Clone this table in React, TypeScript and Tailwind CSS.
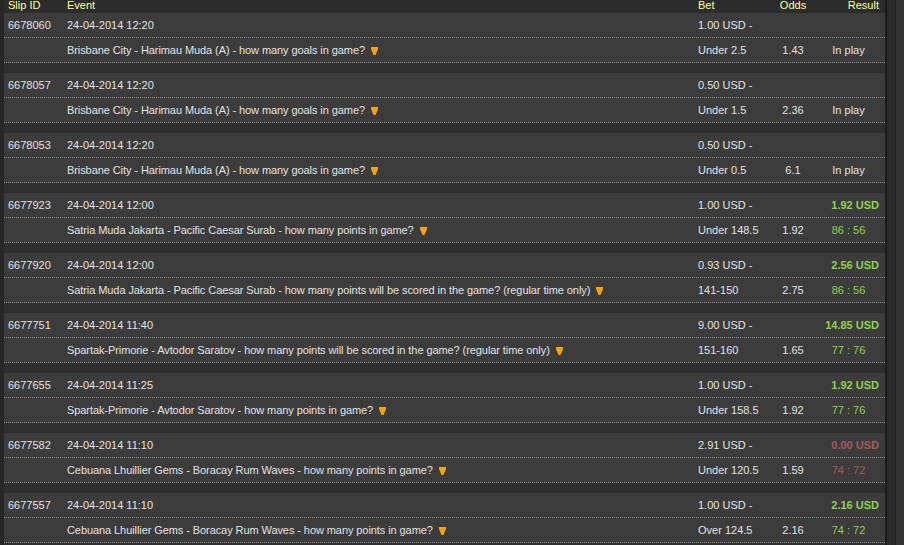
import React from "react";

type Slip = {
  id: string;
  date: string;
  bet: string;
  win: string;
  event: string;
  pick: string;
  odds: string;
  score: string;
  state: "play" | "win" | "loss";
};

const slips: Slip[] = [
  { id: "6678060", date: "24-04-2014 12:20", bet: "1.00 USD -", win: "", event: "Brisbane City - Harimau Muda (A) - how many goals in game?", pick: "Under 2.5", odds: "1.43", score: "In play", state: "play" },
  { id: "6678057", date: "24-04-2014 12:20", bet: "0.50 USD -", win: "", event: "Brisbane City - Harimau Muda (A) - how many goals in game?", pick: "Under 1.5", odds: "2.36", score: "In play", state: "play" },
  { id: "6678053", date: "24-04-2014 12:20", bet: "0.50 USD -", win: "", event: "Brisbane City - Harimau Muda (A) - how many goals in game?", pick: "Under 0.5", odds: "6.1", score: "In play", state: "play" },
  { id: "6677923", date: "24-04-2014 12:00", bet: "1.00 USD -", win: "1.92 USD", event: "Satria Muda Jakarta - Pacific Caesar Surab - how many points in game?", pick: "Under 148.5", odds: "1.92", score: "86 : 56", state: "win" },
  { id: "6677920", date: "24-04-2014 12:00", bet: "0.93 USD -", win: "2.56 USD", event: "Satria Muda Jakarta - Pacific Caesar Surab - how many points will be scored in the game? (regular time only)", pick: "141-150", odds: "2.75", score: "86 : 56", state: "win" },
  { id: "6677751", date: "24-04-2014 11:40", bet: "9.00 USD -", win: "14.85 USD", event: "Spartak-Primorie - Avtodor Saratov - how many points will be scored in the game? (regular time only)", pick: "151-160", odds: "1.65", score: "77 : 76", state: "win" },
  { id: "6677655", date: "24-04-2014 11:25", bet: "1.00 USD -", win: "1.92 USD", event: "Spartak-Primorie - Avtodor Saratov - how many points in game?", pick: "Under 158.5", odds: "1.92", score: "77 : 76", state: "win" },
  { id: "6677582", date: "24-04-2014 11:10", bet: "2.91 USD -", win: "0.00 USD", event: "Cebuana Lhuillier Gems - Boracay Rum Waves - how many points in game?", pick: "Under 120.5", odds: "1.59", score: "74 : 72", state: "loss" },
  { id: "6677557", date: "24-04-2014 11:10", bet: "1.00 USD -", win: "2.16 USD", event: "Cebuana Lhuillier Gems - Boracay Rum Waves - how many points in game?", pick: "Over 124.5", odds: "2.16", score: "74 : 72", state: "win" },
];

const cols = "grid grid-cols-[63px_631px_72px_46px_65px]";

function Arrow() {
  return (
    <svg width="7" height="8" viewBox="0 0 7 8" className="inline-block ml-[6px] align-[-1px]">
      <polygon points="0,0 7,0 7,2 4.5,8 2.5,8 0,2" fill="#f5a30a" />
    </svg>
  );
}

function Row({ s }: { s: Slip }) {
  const color = s.state === "win" ? "text-[#8fd14f]" : s.state === "loss" ? "text-[#a65a5a]" : "text-[#e2e2e2]";
  return (
    <div className="bg-[#3c3c3c]">
      <div className={`${cols} h-[25px] leading-[24px] border-b border-dotted border-[#8a8a8a]`}>
        <div className="pl-[4px]">{s.id}</div>
        <div>{s.date}</div>
        <div>{s.bet}</div>
        <div></div>
        <div className={`text-right pr-[2px] font-bold ${color}`}>{s.win}</div>
      </div>
      <div className={`${cols} h-[25px] leading-[24px] border-b border-dotted border-[#8a8a8a]`}>
        <div></div>
        <div className="whitespace-nowrap tracking-[-0.08px]">
          {s.event}
          <Arrow />
        </div>
        <div>{s.pick}</div>
        <div className="text-center">{s.odds}</div>
        <div className={`text-center ${s.state === "play" ? "text-[#e2e2e2]" : color}`}>{s.score}</div>
      </div>
    </div>
  );
}

export default function App() {
  return (
    <div
      className="w-[904px] h-[545px] overflow-hidden flex bg-[#2f2f2f] text-[#e2e2e2] text-[11px]"
      style={{ fontFamily: '"Liberation Sans", Arial, sans-serif' }}
    >
      <div className="w-[4px] bg-[#272727] shrink-0" />
      <div className="w-[881px] shrink-0 flex flex-col">
        <div className={`${cols} h-[13px] leading-[10px] bg-[#2c2c2c] text-[#ffff99]`}>
          <div className="pl-[4px]">Slip ID</div>
          <div>Event</div>
          <div>Bet</div>
          <div className="text-center">Odds</div>
          <div className="text-right pr-[2px]">Result</div>
        </div>
        <div className="flex flex-col gap-[10px]">
          {slips.map((s) => (
            <Row key={s.id} s={s} />
          ))}
        </div>
      </div>
      <div className="w-[2px] bg-[#1c1c1c] shrink-0" />
      <div className="w-[8px] bg-[#2b2b2b] shrink-0" />
      <div className="w-[1px] bg-[#232323] shrink-0" />
      <div className="flex-1 bg-[#333333]" />
    </div>
  );
}
